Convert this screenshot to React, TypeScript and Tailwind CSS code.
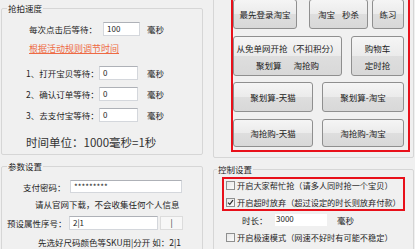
import { ReactNode } from 'react';

const btn =
  'flex flex-col items-center justify-center gap-[5px] border border-[#8f8f8f] rounded-[3px] bg-[linear-gradient(to_bottom,#f5f5f5,#ebebeb_50%,#dedede_50%,#d8d8d8)] text-[#222]';

function Field({ w, h = 'h-[14px]', children }: { w: string; h?: string; children?: ReactNode }) {
  return (
    <div className={`${w} ${h} flex items-center pl-[3px] bg-white border border-[#d4d7dc] border-t-[#aeb1b7] text-[8px]`}>
      {children}
    </div>
  );
}

function Check({ checked = false }: { checked?: boolean }) {
  return (
    <div className="w-[9px] h-[9px] shrink-0 border border-[#8e8f8f] bg-[linear-gradient(135deg,#e6e6e6,#fbfbfb)] flex items-center justify-center">
      {checked && (
        <svg width="7" height="7" viewBox="0 0 7 7">
          <path d="M1 3.6 L2.8 5.4 L6 1.2" fill="none" stroke="#2b2b2b" strokeWidth="1.2" />
        </svg>
      )}
    </div>
  );
}

export default function App() {
  return (
    <div className="w-[415px] h-[249px] overflow-hidden bg-[#f0f0f0] flex text-[8.5px] leading-[12px] text-[#1e1e1e] font-['Noto_Sans_CJK_SC','Noto_Sans',sans-serif]">
      {/* left column */}
      <div className="w-[207px] shrink-0 flex flex-col">
        <fieldset className="ml-px mt-[2px] w-[202px] h-[153px] shrink-0 border border-[#d6d6d6] rounded-[2px]">
          <legend className="ml-[5px] px-[1px] leading-[12px]">抢拍速度</legend>
          <div className="flex items-center mt-[8px] h-[14px]">
            <span className="ml-[27px] w-[74px]">每次点击后等待：</span>
            <Field w="w-[37px]">100</Field>
            <span className="ml-[7px]">毫秒</span>
          </div>
          <div className="mt-[7px] ml-[27px] text-[9px] text-[#ee6a44] underline">根据活动规则调节时间</div>
          <div className="flex items-center mt-[11px] h-[14px]">
            <span className="ml-[24px] w-[73px]">1、打开宝贝等待：</span>
            <Field w="w-[39px]">0</Field>
            <span className="ml-[9px]">毫秒</span>
          </div>
          <div className="flex items-center mt-[7px] h-[14px]">
            <span className="ml-[24px] w-[73px]">2、确认订单等待：</span>
            <Field w="w-[39px]">0</Field>
            <span className="ml-[9px]">毫秒</span>
          </div>
          <div className="flex items-center mt-[7px] h-[14px]">
            <span className="ml-[24px] w-[73px]">3、去支付宝等待：</span>
            <Field w="w-[39px]">0</Field>
            <span className="ml-[9px]">毫秒</span>
          </div>
          <div className="mt-[13px] ml-[24px] text-[11.5px] leading-[14px] text-[#333]">时间单位：1000毫秒=1秒</div>
        </fieldset>

        <fieldset className="ml-px mt-[5px] w-[202px] h-[100px] shrink-0 border border-[#d6d6d6] rounded-[2px]">
          <legend className="ml-[5px] px-[1px] leading-[12px]">参数设置</legend>
          <div className="flex items-center mt-[8px] h-[13px]">
            <span className="ml-[21px] w-[47px]">支付密码：</span>
            <Field w="w-[112px]" h="h-[13px]">*********</Field>
          </div>
          <div className="mt-[5px] ml-[33px]">请从官网下载，不会收集任何个人信息</div>
          <div className="flex items-center mt-[6px] h-[14px]">
            <span className="ml-[5px] w-[62px]">预设属性序号：</span>
            <Field w="w-[89px]">2|1</Field>
            <div className="ml-[2px] w-[23px] h-[14px] flex items-center justify-center bg-[#f7f7f7] border border-[#dcdcdc] text-[8px]">|</div>
          </div>
          <div className="mt-[6px] ml-[36px]">先选好尺码颜色等SKU用|分开 如：2|1</div>
        </fieldset>
      </div>

      {/* right column */}
      <div className="flex-1 flex flex-col">
        <div className="ml-[6px] -mt-[4px] w-[201px] h-[162px] shrink-0 border border-[#d6d6d6] rounded-[2px]">
          <div className="ml-[17px] w-[179px] h-[155px] border-2 border-[#e8101a] pr-[4px]">
            <div className="flex h-[30px]">
              <div className={`${btn} w-[64px]`}>最先登录淘宝</div>
              <div className={`${btn} w-[59px] ml-[12px] flex-row gap-[7px]`}>
                <span>淘宝</span>
                <span>秒杀</span>
              </div>
              <div className={`${btn} w-[32px] ml-[4px]`}>练习</div>
            </div>
            <div className="flex h-[40px] mt-[7px]">
              <div className={`${btn} w-[109px]`}>
                <span>从免单网开抢（不扣积分）</span>
                <span className="flex gap-[12px]">
                  <span>聚划算</span>
                  <span>淘抢购</span>
                </span>
              </div>
              <div className={`${btn} w-[53px] ml-[9px]`}>
                <span>购物车</span>
                <span>定时抢</span>
              </div>
            </div>
            <div className="flex h-[30px] mt-[6px]">
              <div className={`${btn} w-[80px]`}>聚划算-天猫</div>
              <div className={`${btn} w-[82px] ml-[9px]`}>聚划算-淘宝</div>
            </div>
            <div className="flex h-[28px] mt-[7px]">
              <div className={`${btn} w-[80px]`}>淘抢购-天猫</div>
              <div className={`${btn} w-[82px] ml-[9px]`}>淘抢购-淘宝</div>
            </div>
          </div>
        </div>

        <fieldset className="ml-[6px] mt-[5px] w-[201px] h-[100px] shrink-0 border border-[#d6d6d6] rounded-[2px]">
          <legend className="ml-[3px] px-[1px] leading-[12px]">控制设置</legend>
          <div className="ml-[8px] mt-[2px] w-[183px] h-[34px] border-2 border-[#e8101a] pl-[2px] text-[8.2px]">
            <div className="flex items-center h-[12px]">
              <Check />
              <span className="ml-[2px]">开启大家帮忙抢（请多人同时抢一个宝贝）</span>
            </div>
            <div className="flex items-center h-[12px] mt-[5px]">
              <Check checked />
              <span className="ml-[2px]">开启超时放弃（超过设定的时长则放弃付款）</span>
            </div>
          </div>
          <div className="flex items-center h-[12px] mt-[3px]">
            <span className="ml-[28px] w-[33px]">时长：</span>
            <div className="w-[52px] h-[12px] bg-white pl-[1px] text-[8px] leading-[10px]">3000</div>
            <span className="ml-[10px]">毫秒</span>
          </div>
          <div className="flex items-center h-[12px] mt-[5px] ml-[12px] text-[8.2px]">
            <Check />
            <span className="ml-[2px]">开启极速模式（网速不好时有可能不稳定）</span>
          </div>
        </fieldset>
      </div>
    </div>
  );
}
